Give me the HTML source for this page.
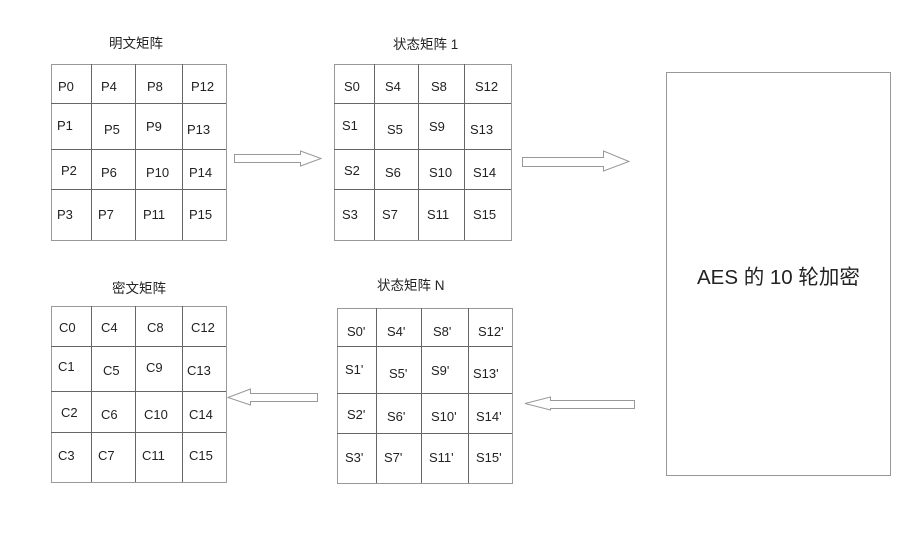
<!DOCTYPE html>
<html><head><meta charset="utf-8"><style>
html,body{margin:0;padding:0;background:#fff;}
svg{display:block;}
text{font-family:"Liberation Sans","Noto Sans CJK SC",sans-serif;font-size:13px;fill:#222;}
.t{font-size:13.5px;}
</style></head><body>
<svg width="917" height="547" viewBox="0 0 917 547" xmlns="http://www.w3.org/2000/svg">
<g fill="none" stroke="#999" stroke-width="1">
<rect x="51.5" y="64.5" width="175" height="176"/>
<path d="M91.5 64V240M135.5 64V240M182.5 64V240M51 103.5H226M51 149.5H226M51 189.5H226" stroke="#666"/>
<rect x="334.5" y="64.5" width="177" height="176"/>
<path d="M374.5 64V240M418.5 64V240M464.5 64V240M334 103.5H511M334 149.5H511M334 189.5H511" stroke="#666"/>
<rect x="51.5" y="306.5" width="175" height="176"/>
<path d="M91.5 306V482M135.5 306V482M182.5 306V482M51 346.5H226M51 391.5H226M51 432.5H226" stroke="#666"/>
<rect x="337.5" y="308.5" width="175" height="175"/>
<path d="M376.5 308V483M421.5 308V483M468.5 308V483M337 346.5H512M337 393.5H512M337 433.5H512" stroke="#666"/>
<rect x="666.5" y="72.5" width="224" height="403"/>
<polygon points="234.5,154.5 300.5,154.5 300.5,151 321,158.5 300.5,166 300.5,162.5 234.5,162.5"/>
<polygon points="522.5,157.5 603.5,157.5 603.5,151 629,161.5 603.5,171 603.5,166.5 522.5,166.5"/>
<polygon points="317.5,393.5 250.5,393.5 250.5,389 228,397.5 250.5,405 250.5,401.5 317.5,401.5"/>
<polygon points="634.5,400.5 550.5,400.5 550.5,397 525,403.5 550.5,410 550.5,408.5 634.5,408.5"/>
</g>
<text class="t" x="109" y="48">明文矩阵</text>
<text class="t" x="393" y="49">状态矩阵 1</text>
<text class="t" x="112" y="293">密文矩阵</text>
<text class="t" x="377" y="290">状态矩阵 N</text>
<text x="697" y="284" style="font-size:20.5px">AES 的 10 轮加密</text>
<text x="58" y="91">P0</text><text x="101" y="91">P4</text><text x="147" y="91">P8</text><text x="191" y="91">P12</text>
<text x="57" y="130">P1</text><text x="104" y="134">P5</text><text x="146" y="131">P9</text><text x="187" y="134">P13</text>
<text x="61" y="175">P2</text><text x="101" y="177">P6</text><text x="146" y="177">P10</text><text x="189" y="177">P14</text>
<text x="57" y="219">P3</text><text x="98" y="219">P7</text><text x="143" y="219">P11</text><text x="189" y="219">P15</text>
<text x="344" y="91">S0</text><text x="385" y="91">S4</text><text x="431" y="91">S8</text><text x="475" y="91">S12</text>
<text x="342" y="130">S1</text><text x="387" y="134">S5</text><text x="429" y="131">S9</text><text x="470" y="134">S13</text>
<text x="344" y="175">S2</text><text x="385" y="177">S6</text><text x="429" y="177">S10</text><text x="473" y="177">S14</text>
<text x="342" y="219">S3</text><text x="382" y="219">S7</text><text x="427" y="219">S11</text><text x="473" y="219">S15</text>
<text x="59" y="332">C0</text><text x="101" y="332">C4</text><text x="147" y="332">C8</text><text x="191" y="332">C12</text>
<text x="58" y="371">C1</text><text x="103" y="375">C5</text><text x="146" y="372">C9</text><text x="187" y="375">C13</text>
<text x="61" y="417">C2</text><text x="101" y="419">C6</text><text x="144" y="419">C10</text><text x="189" y="419">C14</text>
<text x="58" y="460">C3</text><text x="98" y="460">C7</text><text x="142" y="460">C11</text><text x="189" y="460">C15</text>
<text x="347" y="336">S0'</text><text x="387" y="336">S4'</text><text x="433" y="336">S8'</text><text x="478" y="336">S12'</text>
<text x="345" y="374">S1'</text><text x="389" y="378">S5'</text><text x="431" y="375">S9'</text><text x="473" y="378">S13'</text>
<text x="347" y="419">S2'</text><text x="387" y="421">S6'</text><text x="431" y="421">S10'</text><text x="476" y="421">S14'</text>
<text x="345" y="462">S3'</text><text x="384" y="462">S7'</text><text x="429" y="462">S11'</text><text x="476" y="462">S15'</text>
</svg>
</body></html>
